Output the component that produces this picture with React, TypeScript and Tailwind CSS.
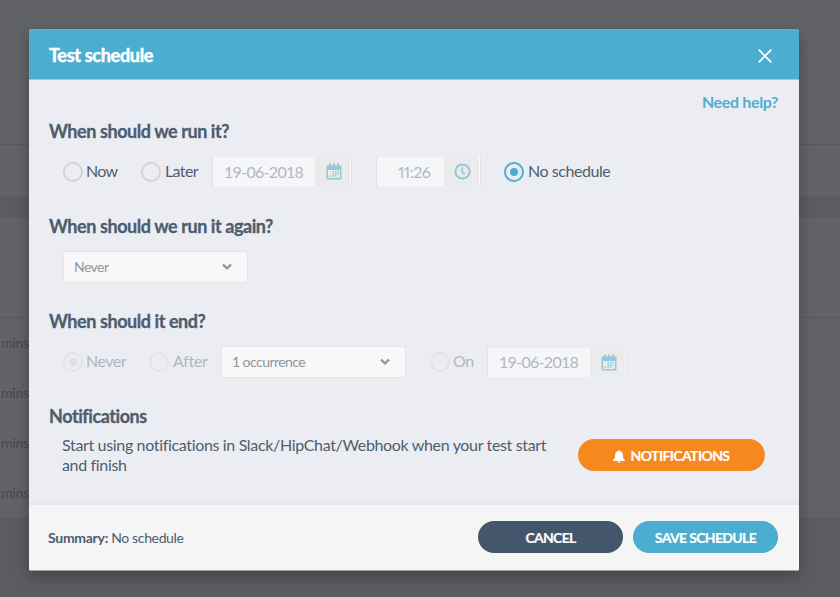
import type { ReactNode } from "react";

/* Dimmed table rows of the page behind the dialog: height and look of each band. */
const bands: string[] = [
  "h-[13px] -mt-[8px]",
  "h-[36px]",
  "h-[35px]",
  "h-[34px]",
  "h-[35px] border-[#58595d]",
  "h-[53px] border-[#58595c]",
  "h-[20px] bg-[#5b5c60]",
  "h-[50px]",
  "h-[50px] border-[#58595c]",
];

const minuteRows = [1, 2, 3, 4];

function Backdrop() {
  return (
    <div className="absolute inset-0 overflow-hidden bg-[#5b5c60]">
      <div className="bg-[#626366]">
        {bands.map((band, i) => (
          <div key={i} className={`border-b border-[#5d5e61] ${band}`} />
        ))}
        {minuteRows.map((row) => (
          <div
            key={row}
            className="flex h-[50px] items-center border-b border-[#5d5e61] pl-px text-[14px] tracking-[-0.2px] text-[#46484d]"
          >
            mins
          </div>
        ))}
      </div>
    </div>
  );
}

function Radio({ checked = false, disabled = false }: { checked?: boolean; disabled?: boolean }) {
  const active = checked && !disabled;
  const ring = active ? "border-[#4badcf]" : disabled ? "border-[#e2e3e6]" : "border-[#d2d3d8]";
  return (
    <span className={`flex size-[20px] shrink-0 items-center justify-center rounded-full border-2 ${ring}`}>
      {checked && <span className={`size-[8px] rounded-full ${active ? "bg-[#4badcf]" : "bg-[#dfe0e3]"}`} />}
    </span>
  );
}

function Heading({ children }: { children: ReactNode }) {
  return (
    <h2 className="h-[22px] text-[18px] leading-[22px] font-bold tracking-[-0.43px] text-[#4c5d6e] [-webkit-text-stroke:0.3px]">
      {children}
    </h2>
  );
}

function CalendarIcon() {
  return (
    <svg width="16" height="17" viewBox="0 0 16 17" fill="#94c8db">
      <path
        fillRule="evenodd"
        d="M1.500 2.500H3V.5h2v2h2V.5h2v2h2V.5h2v2h1.500a1 1 0 0 1 1 1V15a1.500 1.500 0 0 1-1.500 1.500H2A1.500 1.500 0 0 1 .5 15V3.500a1 1 0 0 1 1-1ZM2 7v7.500a.6.6 0 0 0 .6.600h10.800a.6.6 0 0 0 .6-.600V7Z"
      />
      <path d="M6.500 8H8v1.600H6.500zM8.900 8h1.500v1.600H8.900zM11.300 8h1.500v1.600h-1.500zM6.500 10.300H8v1.500H6.500zM8.900 10.300h1.500v1.500H8.900zM11.300 10.300h1.500v1.500h-1.500zM3.500 12.300H5v1.500H3.500zM6.500 12.300H8v1.500H6.500zM8.900 12.300h1.500v1.500H8.900z" />
    </svg>
  );
}

function ClockIcon() {
  return (
    <svg width="17" height="17" viewBox="0 0 17 17" fill="none" stroke="#94c8db">
      <circle cx="8.500" cy="8.500" r="7.100" strokeWidth="2" />
      <path d="M8.200 4v4.900l2.600 2.600" strokeWidth="1.800" />
    </svg>
  );
}

function PickerField({ kind, value }: { kind: "date" | "time"; value: string }) {
  const isDate = kind === "date";
  return (
    <div className="flex h-[31px] shrink-0 border-x border-[#e2e3e8] py-px">
      <div
        className={`flex items-center bg-[#f5f6f8] text-[16px] whitespace-nowrap text-[#b2b7c2] ${
          isDate ? "w-[102px] pl-[11px] tracking-[-0.7px]" : "w-[67px] pl-[21px] tracking-[-0.5px] proportional-nums"
        }`}
      >
        {value}
      </div>
      <div
        className={`flex w-[36px] items-center justify-center border-r border-[#fafafb] bg-[#ebebec] ${
          isDate ? "pl-[3px]" : "pl-[2px]"
        }`}
      >
        {isDate ? <CalendarIcon /> : <ClockIcon />}
      </div>
    </div>
  );
}

function SelectBox({ value }: { value: string }) {
  return (
    <div className="flex h-[32px] w-[185px] shrink-0 items-center justify-between rounded-[2px] border border-[#e3e5ea] bg-[#f8f8f8] pr-[15px] pl-[10px] text-[14px] tracking-[-0.55px] text-[#8d96a3]">
      <span className="pb-px">{value}</span>
      <svg width="10" height="8" viewBox="0 0 10 8" fill="none" stroke="#8d98a6" strokeWidth="2.400">
        <path d="M.9 1.500 5 5.400l4.100-3.900" />
      </svg>
    </div>
  );
}

function PillButton({ className, children }: { className: string; children: ReactNode }) {
  return (
    <button
      className={`flex h-[32px] shrink-0 items-center justify-center rounded-full pt-px text-[14px] font-bold whitespace-nowrap text-white [-webkit-text-stroke:0.2px] ${className}`}
    >
      {children}
    </button>
  );
}

export default function App() {
  return (
    <div className="relative h-[597px] w-[840px] overflow-hidden px-[29px] pt-[29px] font-['Lato',sans-serif]">
      <Backdrop />
      <div className="relative flex h-[542px] w-[770px] flex-col overflow-hidden rounded-[3px] bg-[#ecedf3] shadow-[0_5px_15px_rgba(0,0,0,0.28)]">
        <header className="flex h-[51px] shrink-0 items-center justify-between border-t border-b border-t-[#6fa9bd] border-b-[#92cce0] bg-[#4badcf] pr-[27px] pl-[20px]">
          <h1 className="pt-px text-[18px] font-bold tracking-[-0.3px] text-white [-webkit-text-stroke:0.5px]">
            Test schedule
          </h1>
          <svg className="mt-[2px]" width="14" height="14" viewBox="0 0 14 14" fill="none" stroke="#fff" strokeWidth="1.900">
            <path d="m.7.7 12.600 12.600M13.300.7.7 13.300" />
          </svg>
        </header>

        <main className="flex h-[425px] shrink-0 flex-col pr-[21px] pl-[20px] text-[16px] text-[#4c5d6e]">
          <div className="flex h-[40px] items-start justify-end pt-[12px] leading-[20px] font-bold tracking-[-0.35px] text-[#50afd0]">
            Need help?
          </div>

          <section className="h-[95px]">
            <Heading>When should we run it?</Heading>
            <div className="mt-[14px] flex h-[31px] items-center pl-[14px] whitespace-nowrap">
              <Radio />
              <span className="ml-[3px] w-[55px] pb-[2px] tracking-[-0.7px]">Now</span>
              <Radio />
              <span className="ml-[4px] w-[47px] pb-[2px] tracking-[-0.6px]">Later</span>
              <PickerField kind="date" value="19-06-2018" />
              <div className="w-[24px]" />
              <PickerField kind="time" value="11:26" />
              <div className="w-[23px]" />
              <Radio checked />
              <span className="ml-[4px] pb-[2px] tracking-[-0.45px]">No schedule</span>
            </div>
          </section>

          <section className="h-[95px]">
            <Heading>When should we run it again?</Heading>
            <div className="mt-[14px] flex pl-[14px]">
              <SelectBox value="Never" />
            </div>
          </section>

          <section className="h-[95px]">
            <Heading>When should it end?</Heading>
            <div className="mt-[14px] flex h-[32px] items-center pl-[14px] whitespace-nowrap text-[#b0b7c0]">
              <Radio checked disabled />
              <span className="ml-[3px] w-[63px] pb-[2px] tracking-[-0.5px]">Never</span>
              <Radio disabled />
              <span className="ml-[4px] w-[48px] pb-[2px] tracking-[-0.3px]">After</span>
              <SelectBox value="1 occurrence" />
              <div className="w-[24px]" />
              <Radio disabled />
              <span className="ml-[3px] w-[34px] pb-[2px] tracking-[-0.5px]">On</span>
              <PickerField kind="date" value="19-06-2018" />
            </div>
          </section>

          <section className="h-[95px]">
            <Heading>Notifications</Heading>
            <div className="flex justify-between pt-[8px] pr-[13px] pl-[13px]">
              <p className="w-[500px] leading-[20px] tracking-[-0.34px]">
                Start using notifications in Slack/HipChat/Webhook when your test start
                <br />
                and finish
              </p>
              <div className="pt-[4px]">
                <PillButton className="w-[187px] gap-[6px] bg-[#f5881f] pr-px tracking-[-0.6px]">
                  <svg className="mt-px" width="12" height="13" viewBox="0 0 12 13" fill="#fff">
                    <path d="M6 .2a.8.8 0 0 1 .8.9C8.800 1.500 9.900 3 9.900 5c0 2.700.7 4.100 2 5.200v.8H.1v-.8C1.400 9.100 2.100 7.700 2.100 5c0-2 1.100-3.500 3.100-3.900A.8.8 0 0 1 6 .2ZM4.500 11.300h3a1.500 1.500 0 0 1-3 0Z" />
                  </svg>
                  NOTIFICATIONS
                </PillButton>
              </div>
            </div>
          </section>
          <div className="-mr-[21px] -ml-[20px] h-[5px] bg-linear-to-b from-[#ebecf1] to-[#e5e6ea]" />
        </main>

        <footer className="flex h-[66px] shrink-0 items-center border-b border-[#a2a3a5] bg-[#f5f5f5] pr-[21px] pb-px pl-[19px] text-[14px] text-[#4c5d6e]">
          <p className="grow pt-px tracking-[-0.36px]">
            <strong className="tracking-[-0.28px]">Summary:</strong> No schedule
          </p>
          <PillButton className="mr-[10px] w-[145px] bg-[#43566b] tracking-[-0.7px]">CANCEL</PillButton>
          <PillButton className="w-[145px] bg-[#4badcf] tracking-[-0.65px]">SAVE SCHEDULE</PillButton>
        </footer>
      </div>
    </div>
  );
}
